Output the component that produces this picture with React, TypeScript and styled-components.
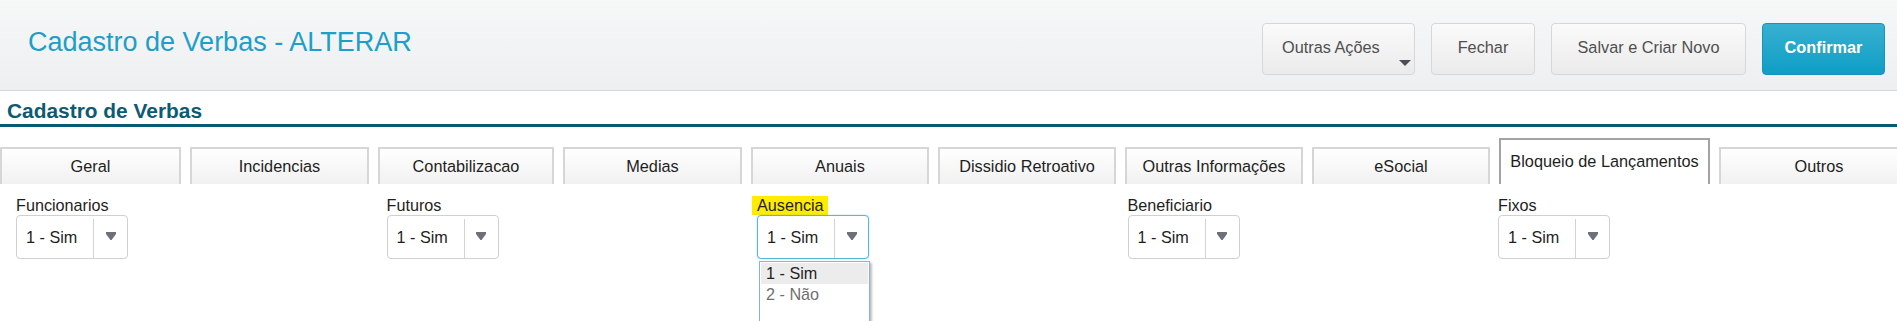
import React from "react";
import styled, { createGlobalStyle } from "styled-components";

const GlobalStyle = createGlobalStyle`
  html, body {
    margin: 0;
    padding: 0;
    background: #ffffff;
    overflow: hidden;
  }
  body {
    font-family: "Liberation Sans", Arial, sans-serif;
    color: #222;
  }
  * { box-sizing: border-box; }
`;

const Page = styled.div`
  width: 1897px;
  height: 321px;
  overflow: hidden;
  display: flex;
  flex-direction: column;
`;

const Header = styled.header`
  height: 91px;
  flex: 0 0 91px;
  display: flex;
  align-items: center;
  justify-content: space-between;
  padding: 0 12px 0 28px;
  background: linear-gradient(#f6f7f7, #eeeff1);
  border-top: 2px solid #f7f7f7;
  border-bottom: 1px solid #d8d8d8;
`;

const Title = styled.h1`
  margin: -7px 0 0 0;
  font-size: 27px;
  font-weight: normal;
  color: #1c9fc8;
  letter-spacing: 0;
`;

const Actions = styled.div`
  display: flex;
  gap: 16px;
  align-items: center;
  margin-top: 5px;
`;

const ActionButton = styled.button<{ $width: number; $primary?: boolean; $align?: string }>`
  position: relative;
  width: ${(p) => p.$width}px;
  height: 52px;
  border-radius: 4px;
  font-family: "Liberation Sans", Arial, sans-serif;
  font-size: 16.3px;
  display: flex;
  align-items: center;
  justify-content: ${(p) => p.$align || "center"};
  padding: 0 0 2px ${(p) => (p.$align ? "19px" : "0")};
  cursor: pointer;
  color: ${(p) => (p.$primary ? "#ffffff" : "#4f4f4f")};
  font-weight: ${(p) => (p.$primary ? "bold" : "normal")};
  border: 1px solid ${(p) => (p.$primary ? "#1795b8" : "#d6d7d8")};
  background: ${(p) =>
    p.$primary
      ? "linear-gradient(#38b0d2, #0f9ec4)"
      : "linear-gradient(#fafafa, #ebebeb)"};
`;

const Caret = styled.span`
  position: absolute;
  right: 3px;
  bottom: 8px;
  width: 0;
  height: 0;
  border-left: 6.5px solid transparent;
  border-right: 6.5px solid transparent;
  border-top: 6px solid #4d4f57;
`;

const SectionBar = styled.div`
  padding: 8px 0 2px 7px;
  border-bottom: 3px solid #0a5b72;
`;

const SectionTitle = styled.h2`
  margin: 0;
  font-size: 20.9px;
  line-height: 23px;
  font-weight: bold;
  color: #0d5a73;
`;

const TabStrip = styled.nav`
  margin-top: 11px;
  height: 46px;
  display: flex;
  align-items: flex-end;
  gap: 9px;
  overflow: hidden;
`;

const Tab = styled.div<{ $width: number; $active?: boolean }>`
  flex: 0 0 ${(p) => p.$width}px;
  height: ${(p) => (p.$active ? 46 : 37)}px;
  display: flex;
  align-items: center;
  justify-content: center;
  font-size: 16.3px;
  color: #1e1e1e;
  white-space: nowrap;
  border: 2px solid ${(p) => (p.$active ? "#a3a3a3" : "#d6d6d6")};
  border-bottom: none;
  background: ${(p) =>
    p.$active ? "#ffffff" : "linear-gradient(#ffffff, #f1f1f1)"};
  padding-bottom: ${(p) => (p.$active ? "2px" : "0")};
`;

const Fields = styled.div`
  display: grid;
  grid-template-columns: repeat(5, 370.5px);
  padding: 12px 0 0 16px;
`;

const Field = styled.div`
  position: relative;
  display: flex;
  flex-direction: column;
  align-items: flex-start;
`;

const Label = styled.label<{ $highlight?: boolean }>`
  font-size: 16.2px;
  line-height: 19px;
  color: #1e1e1e;
  background: ${(p) => (p.$highlight ? "#ffec00" : "transparent")};
  padding: 0 ${(p) => (p.$highlight ? "4px" : "0")} 0 ${(p) => (p.$highlight ? "5px" : "0")};
  margin-left: ${(p) => (p.$highlight ? "-5px" : "0")};
`;

const Select = styled.div<{ $focused?: boolean }>`
  width: 112px;
  height: 44px;
  display: flex;
  border: 1px solid ${(p) => (p.$focused ? "#56b7d6" : "#cfd0d2")};
  border-radius: 4px;
  background: #fff;
  box-shadow: ${(p) => (p.$focused ? "0 0 2px rgba(86,183,214,0.5)" : "none")};
`;

const SelectValue = styled.span`
  flex: 0 0 76px;
  display: flex;
  align-items: center;
  padding-left: 9px;
  font-size: 16.2px;
  color: #1e1e1e;
`;

const SelectArrow = styled.span`
  flex: 1;
  display: flex;
  align-items: center;
  justify-content: center;
  margin-top: 3px;
  border-left: 1px solid #d3d3d3;
  padding-bottom: 5px;
`;

const OptionList = styled.ul`
  position: absolute;
  top: 65px;
  left: 2px;
  width: 111px;
  height: 80px;
  margin: 0;
  padding: 1px;
  list-style: none;
  background: #fff;
  border: 1px solid #86b2e8;
  box-shadow: 2px 2px 2px rgba(0, 0, 0, 0.25);
`;

const Option = styled.li<{ $selected?: boolean }>`
  height: 21px;
  line-height: 21px;
  padding-left: 5px;
  font-size: 16.2px;
  color: ${(p) => (p.$selected ? "#1e1e1e" : "#707070")};
  background: ${(p) => (p.$selected ? "#ececec" : "transparent")};
`;

const ArrowIcon = () => (
  <svg width="10" height="8" viewBox="0 0 10 8" aria-hidden="true">
    <polygon points="0,0 10,0 10,2 5.6,8 4.4,8 0,2" fill="#6e7079" />
  </svg>
);

const tabs: { label: string; width: number; active?: boolean }[] = [
  { label: "Geral", width: 181 },
  { label: "Incidencias", width: 179 },
  { label: "Contabilizacao", width: 176 },
  { label: "Medias", width: 179 },
  { label: "Anuais", width: 178 },
  { label: "Dissidio Retroativo", width: 178 },
  { label: "Outras Informações", width: 178 },
  { label: "eSocial", width: 178 },
  { label: "Bloqueio de Lançamentos", width: 211, active: true },
  { label: "Outros", width: 200 },
];

const fields = ["Funcionarios", "Futuros", "Ausencia", "Beneficiario", "Fixos"];

export default function App() {
  return (
    <Page>
      <GlobalStyle />
      <Header>
        <Title>Cadastro de Verbas - ALTERAR</Title>
        <Actions>
          <ActionButton $width={153} $align="flex-start">
            Outras Ações
            <Caret />
          </ActionButton>
          <ActionButton $width={104}>Fechar</ActionButton>
          <ActionButton $width={195}>Salvar e Criar Novo</ActionButton>
          <ActionButton $width={123} $primary>
            Confirmar
          </ActionButton>
        </Actions>
      </Header>
      <SectionBar>
        <SectionTitle>Cadastro de Verbas</SectionTitle>
      </SectionBar>
      <TabStrip>
        {tabs.map((t) => (
          <Tab key={t.label} $width={t.width} $active={t.active}>
            {t.label}
          </Tab>
        ))}
      </TabStrip>
      <Fields>
        {fields.map((f) => {
          const isOpen = f === "Ausencia";
          return (
            <Field key={f}>
              <Label $highlight={isOpen}>{f}</Label>
              <Select $focused={isOpen}>
                <SelectValue>1 - Sim</SelectValue>
                <SelectArrow>
                  <ArrowIcon />
                </SelectArrow>
              </Select>
              {isOpen && (
                <OptionList>
                  <Option $selected>1 - Sim</Option>
                  <Option>2 - Não</Option>
                </OptionList>
              )}
            </Field>
          );
        })}
      </Fields>
    </Page>
  );
}
